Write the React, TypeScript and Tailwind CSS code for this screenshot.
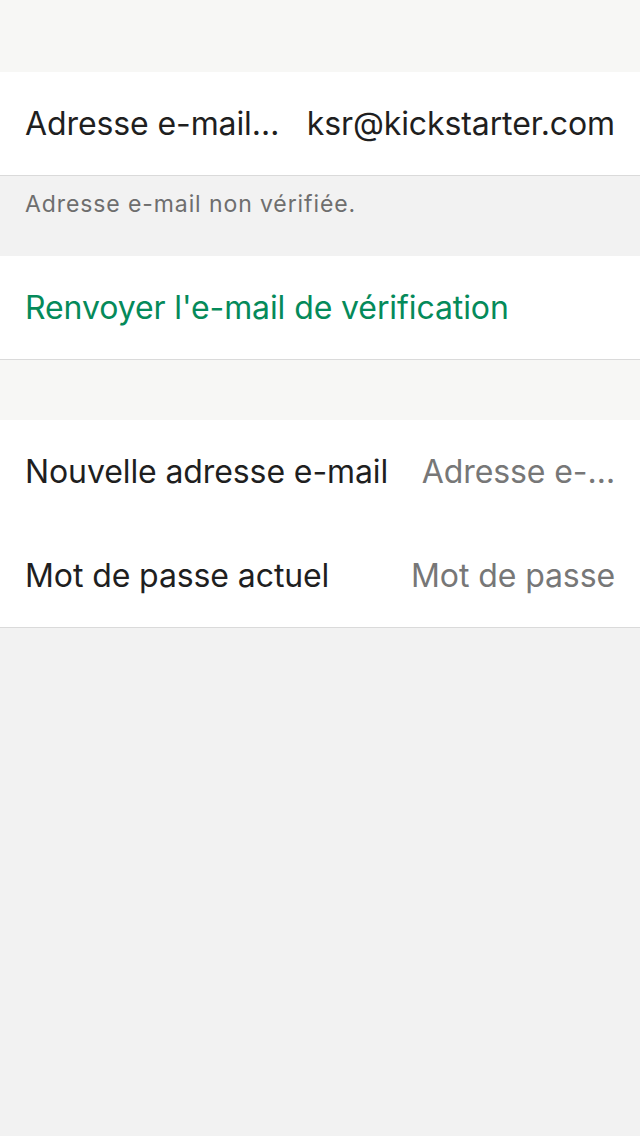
import React from "react";

const font = { fontFamily: "Inter, 'Noto Sans', sans-serif" };

function Row({ label, value, valueClass, h }: { label: string; value: string; valueClass: string; h: string }) {
  return (
    <div className={`flex ${h} items-center justify-between bg-white px-[25px]`}>
      <span className="whitespace-nowrap text-[32px] tracking-[-0.1px] text-[#1f1f1f]">{label}</span>
      <span className={`whitespace-nowrap text-[32px] tracking-[-0.1px] ${valueClass}`}>{value}</span>
    </div>
  );
}

export default function App() {
  return (
    <div className="flex min-h-[1136px] w-[640px] flex-col bg-[#f2f2f2]" style={font}>
      <div className="h-[72px] bg-[#f7f7f5]" />
      <div className="border-b border-[#dadada]">
        <Row h="h-[103px]" label="Adresse e-mail…" value="ksr@kickstarter.com" valueClass="text-[#1f1f1f]" />
      </div>
      <div className="h-[80px] bg-[#f2f2f2] px-[25px] pt-[14px]">
        <p className="text-[23px] leading-[28px] tracking-[0.9px] text-[#6e6e6e]">Adresse e-mail non vérifiée.</p>
      </div>
      <div className="flex h-[104px] items-center border-b border-[#dadada] bg-white px-[25px]">
        <span className="text-[32px] tracking-[-0.1px] text-[#058a5a]">Renvoyer l'e-mail de vérification</span>
      </div>
      <div className="h-[60px] bg-[#f7f7f5]" />
      <div className="border-b border-[#dadada] bg-white">
        <Row h="h-[104px]" label="Nouvelle adresse e-mail" value="Adresse e-…" valueClass="text-[#777777]" />
        <Row h="h-[103px]" label="Mot de passe actuel" value="Mot de passe" valueClass="text-[#777777]" />
      </div>
      <div className="flex-1 bg-[#f2f2f2]" />
    </div>
  );
}
